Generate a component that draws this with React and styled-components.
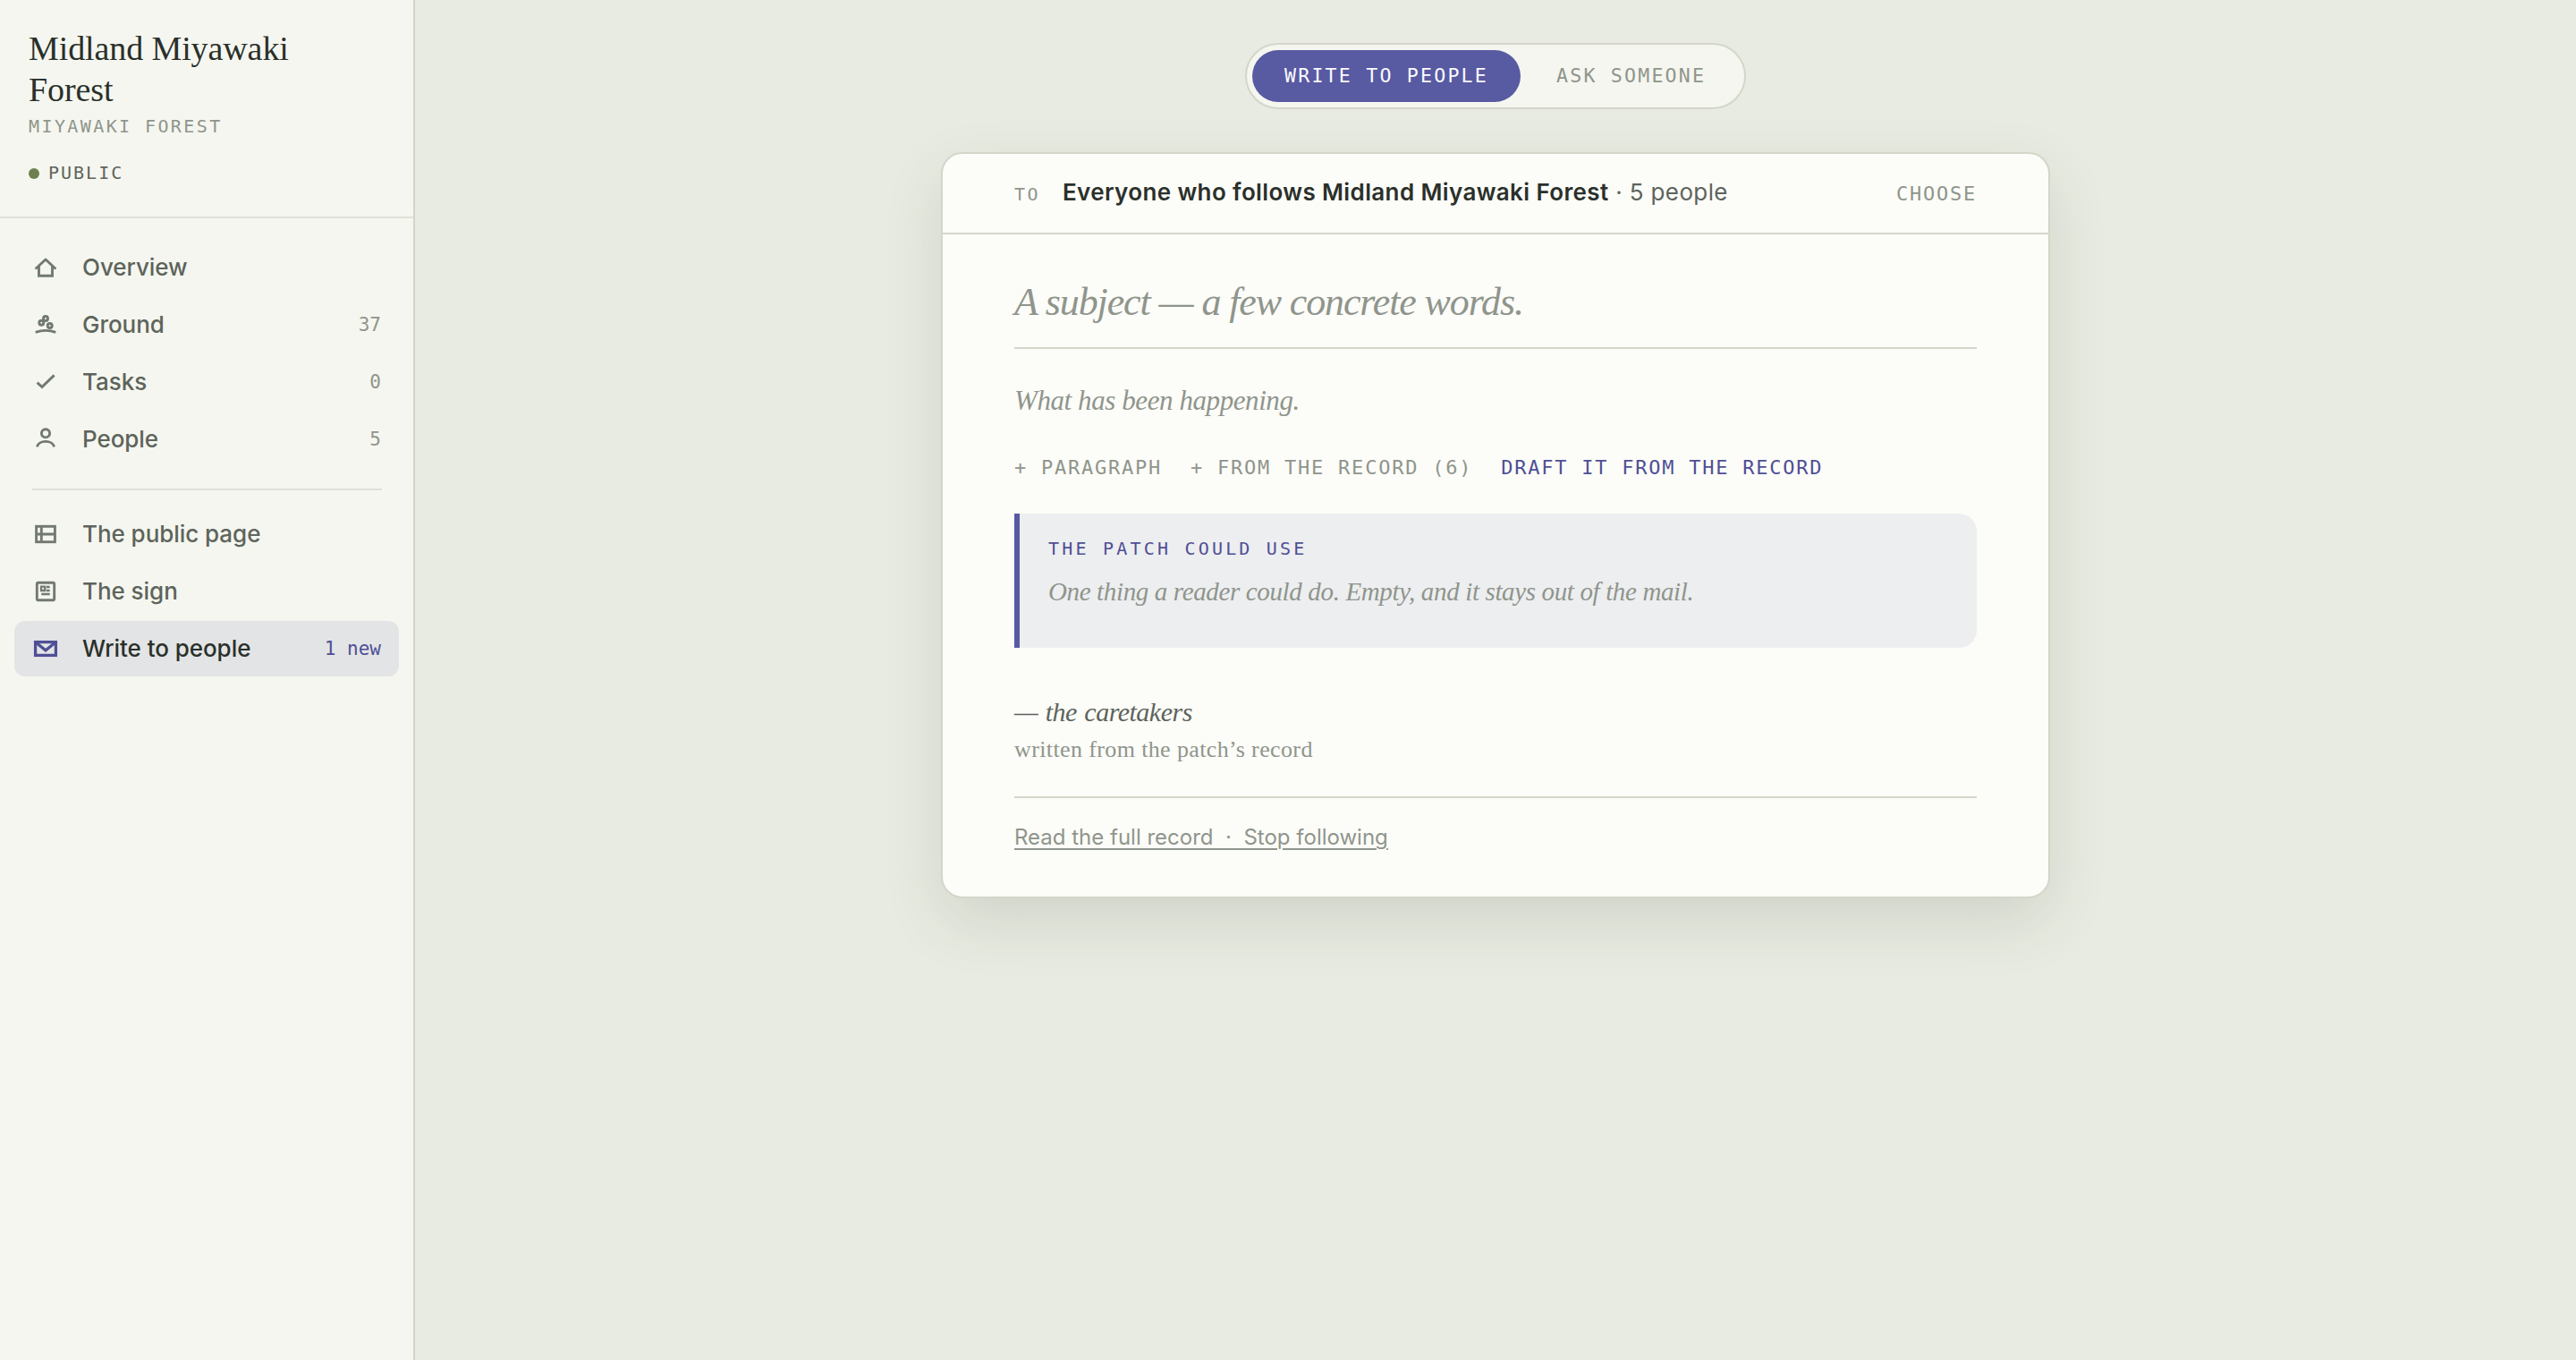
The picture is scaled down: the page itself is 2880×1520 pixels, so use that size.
import React from "react";
import styled, { createGlobalStyle, css } from "styled-components";

const color = {
  ground: "#e8ebe1",
  panel: "#f5f6ef",
  sheet: "#fcfcf8",
  line: "#d3d6c9",
  softLine: "#e0e2da",
  ink: "#2a302b",
  body: "#5d645c",
  icon: "#727a70",
  faint: "#8f958c",
  accent: "#585aa2",
  accentInk: "#4f4f96",
  moss: "#6f8050",
};

const serif = `"Liberation Serif", "Times New Roman", serif`;
const sans = `Inter, "Liberation Sans", sans-serif`;
const mono = `"DejaVu Sans Mono", "Liberation Mono", monospace`;

const GlobalStyle = createGlobalStyle`
  *, *::before, *::after { box-sizing: border-box; }
  body { margin: 0; background: ${color.ground}; color: ${color.ink}; font-family: ${sans}; }
  button, a { font: inherit; color: inherit; background: none; border: 0; padding: 0; margin: 0; }
`;

const caps = css`
  font-family: ${mono};
  text-transform: uppercase;
  white-space: pre;
`;

const Page = styled.div`
  display: flex;
  min-height: 100vh;
`;

const Sidebar = styled.aside`
  flex: 0 0 464px;
  background: ${color.panel};
  border-right: 2px solid ${color.line};
`;

const Place = styled.header`
  height: 244px;
  padding: 31px 32px 0;
  border-bottom: 2px solid ${color.softLine};
`;

const PlaceName = styled.h1`
  max-width: 360px;
  margin: 0;
  font: 400 38px/46px ${serif};
  letter-spacing: -0.1px;
`;

const PlaceKind = styled.div`
  ${caps}
  margin-top: 4px;
  font-size: 20px;
  line-height: 28px;
  letter-spacing: 2.4px;
  color: ${color.faint};
`;

const Status = styled.div`
  ${caps}
  display: flex;
  align-items: center;
  gap: 10px;
  margin-top: 24px;
  font-size: 20px;
  line-height: 28px;
  letter-spacing: 2px;
  color: ${color.body};
`;

const Dot = styled.span`
  width: 12px;
  height: 12px;
  margin-top: 2px;
  border-radius: 50%;
  background: ${color.moss};
`;

const Nav = styled.nav`
  display: flex;
  flex-direction: column;
  gap: 2px;
  padding: 24px 16px;
`;

const NavRow = styled.button`
  display: flex;
  align-items: center;
  height: 62px;
  padding: 0 20px;
  border-radius: 12px;
  text-align: left;
  color: ${(p) => (p.$active ? color.ink : color.body)};
  background: ${(p) => (p.$active ? "#e3e4e5" : "transparent")};
`;

const NavIcon = styled.svg`
  flex: none;
  width: 30px;
  height: 30px;
  margin-right: 26px;
  fill: none;
  stroke: ${(p) => (p.$active ? color.accentInk : color.icon)};
  stroke-width: ${(p) => (p.$active ? 3.3 : 2.9)};
`;

const NavLabel = styled.span`
  flex: 1;
  font-size: 26px;
  font-weight: 500;
  line-height: 36px;
  letter-spacing: -0.05px;
`;

const NavNote = styled.span`
  font-family: ${mono};
  font-size: 21px;
  color: ${(p) => (p.$active ? color.accentInk : color.faint)};
`;

const NavRule = styled.hr`
  width: 391px;
  height: 2px;
  margin: 22px 0 16px 20px;
  border: 0;
  background: ${color.softLine};
`;

const Main = styled.main`
  flex: 1;
  display: flex;
  flex-direction: column;
  align-items: center;
  gap: 48px;
  padding-top: 48px;
`;

const Toggle = styled.div`
  display: flex;
  gap: 4px;
  width: 560px;
  height: 74px;
  padding: 6px;
  border: 2px solid ${color.line};
  border-radius: 37px;
  background: ${color.panel};
`;

const ToggleOption = styled.button`
  ${caps}
  height: 58px;
  padding: 0 36px 1px;
  border-radius: 29px;
  font-size: 21.6px;
  letter-spacing: 2.2px;
  color: ${(p) => (p.$on ? "#fbfbff" : color.faint)};
  background: ${(p) => (p.$on ? color.accent : "transparent")};
`;

const Sheet = styled.section`
  width: 1240px;
  height: 834px;
  border: 2px solid ${color.line};
  border-radius: 24px;
  background: ${color.sheet};
  box-shadow: 0 26px 68px -2px rgba(42, 52, 38, 0.13);
`;

const Recipients = styled.div`
  display: flex;
  align-items: baseline;
  height: 90px;
  padding: 25px 80px 0;
  border-bottom: 2px solid ${color.line};
  line-height: 36px;
`;

const ToLabel = styled.span`
  ${caps}
  width: 54px;
  font-size: 20px;
  letter-spacing: 2.4px;
  color: ${color.faint};
`;

const Audience = styled.span`
  flex: 1;
  font-size: 26px;
  letter-spacing: 0.37px;
  color: ${color.body};

  strong {
    font-weight: 600;
    color: ${color.ink};
  }
`;

const TextAction = styled.button`
  ${caps}
  font-size: 22px;
  line-height: 30px;
  letter-spacing: 1.76px;
  color: ${(p) => (p.$accent ? color.accentInk : color.faint)};
`;

const Letter = styled.div`
  padding: 46px 80px 0;
`;

const Subject = styled.div`
  height: 82px;
  border-bottom: 2px solid ${color.line};
  font: italic 400 44px/60px ${serif};
  letter-spacing: -1.12px;
  color: ${color.faint};
`;

const Opening = styled.div`
  margin-top: 36px;
  font: italic 400 31px/44px ${serif};
  letter-spacing: -0.42px;
  color: ${color.faint};
`;

const Actions = styled.div`
  display: flex;
  gap: 32px;
  margin-top: 38px;
`;

const Ask = styled.div`
  height: 150px;
  margin-top: 36px;
  padding: 26px 32px 0;
  border-left: 6px solid ${color.accent};
  border-radius: 0 20px 20px 0;
  background: #edeef0;
`;

const AskLabel = styled.div`
  ${caps}
  font-size: 20px;
  line-height: 26px;
  letter-spacing: 3.2px;
  color: ${color.accentInk};
`;

const AskText = styled.div`
  margin-top: 14px;
  font: italic 400 29px/42px ${serif};
  letter-spacing: -0.36px;
  color: ${color.faint};
`;

const Signature = styled.div`
  margin-top: 52px;
  font: italic 400 30px/40px ${serif};
  letter-spacing: -0.5px;
  word-spacing: 1.5px;
  color: ${color.body};
`;

const Source = styled.div`
  height: 76px;
  padding-top: 2px;
  border-bottom: 2px solid ${color.line};
  font: 400 26px/40px ${serif};
  letter-spacing: 0.38px;
  color: ${color.faint};
`;

const Footer = styled.a`
  display: block;
  margin-top: 27px;
  font-size: 24px;
  line-height: 34px;
  white-space: pre;
  text-decoration: underline 2px;
  text-underline-offset: 4px;
  color: ${color.faint};
`;

const icons = {
  home: (
    <>
      <path d="M4.5 15.8 15 6l10.5 9.8" strokeLinecap="round" strokeLinejoin="round" />
      <path d="M7.5 13.5v10.7h15v-10.7" />
    </>
  ),
  ground: (
    <>
      <circle cx="10.3" cy="12.7" r="2.5" />
      <circle cx="15" cy="8" r="2.5" />
      <circle cx="19.7" cy="16" r="2.5" />
      <path d="M3.7 23.4Q15 19.3 26.3 23.4" />
    </>
  ),
  check: <path d="M5.6 15.6 11 20.6 24.6 7.4" />,
  person: (
    <>
      <circle cx="15" cy="8.3" r="4.6" />
      <path d="M5.4 23.4C7 15.4 23 15.4 24.6 23.4" />
    </>
  ),
  page: (
    <>
      <rect x="4.6" y="6.3" width="20.8" height="17.4" />
      <path d="M10.3 6.3v17.4M4.6 15h20.8" />
    </>
  ),
  sign: (
    <>
      <rect x="5.3" y="5.3" width="19.4" height="19.4" rx="1.5" />
      <path d="M10 9.7h4.3v4.300H10zM16 10h3.700M16 14h3.700M10.300 18h9.400" strokeWidth="2.3" />
    </>
  ),
  mail: (
    <>
      <rect x="3.6" y="7.6" width="22.8" height="14.8" />
      <path d="M4.3 8.3 15 16.8 25.7 8.3" />
    </>
  ),
};

const NavItem = ({ icon, label, note, active }) => (
  <NavRow $active={active}>
    <NavIcon $active={active} viewBox="0 0 30 30" aria-hidden="true">
      {icons[icon]}
    </NavIcon>
    <NavLabel>{label}</NavLabel>
    {note && <NavNote $active={active}>{note}</NavNote>}
  </NavRow>
);

export default function App() {
  return (
    <>
      <GlobalStyle />
      <Page>
        <Sidebar>
          <Place>
            <PlaceName>Midland Miyawaki Forest</PlaceName>
            <PlaceKind>Miyawaki forest</PlaceKind>
            <Status>
              <Dot />
              Public
            </Status>
          </Place>
          <Nav>
            <NavItem icon="home" label="Overview" />
            <NavItem icon="ground" label="Ground" note="37" />
            <NavItem icon="check" label="Tasks" note="0" />
            <NavItem icon="person" label="People" note="5" />
            <NavRule />
            <NavItem icon="page" label="The public page" />
            <NavItem icon="sign" label="The sign" />
            <NavItem icon="mail" label="Write to people" note="1 new" active />
          </Nav>
        </Sidebar>
        <Main>
          <Toggle>
            <ToggleOption $on>Write to people</ToggleOption>
            <ToggleOption>Ask someone</ToggleOption>
          </Toggle>
          <Sheet>
            <Recipients>
              <ToLabel>To</ToLabel>
              <Audience>
                <strong>Everyone who follows Midland Miyawaki Forest</strong> · 5 people
              </Audience>
              <TextAction>Choose</TextAction>
            </Recipients>
            <Letter>
              <Subject>A subject — a few concrete words.</Subject>
              <Opening>What has been happening.</Opening>
              <Actions>
                <TextAction>+ Paragraph</TextAction>
                <TextAction>+ From the record (6)</TextAction>
                <TextAction $accent>Draft it from the record</TextAction>
              </Actions>
              <Ask>
                <AskLabel>The patch could use</AskLabel>
                <AskText>One thing a reader could do. Empty, and it stays out of the mail.</AskText>
              </Ask>
              <Signature>— the caretakers</Signature>
              <Source>written from the patch’s record</Source>
              <Footer>{"Read the full record \u00a0·\u00a0 Stop following"}</Footer>
            </Letter>
          </Sheet>
        </Main>
      </Page>
    </>
  );
}
